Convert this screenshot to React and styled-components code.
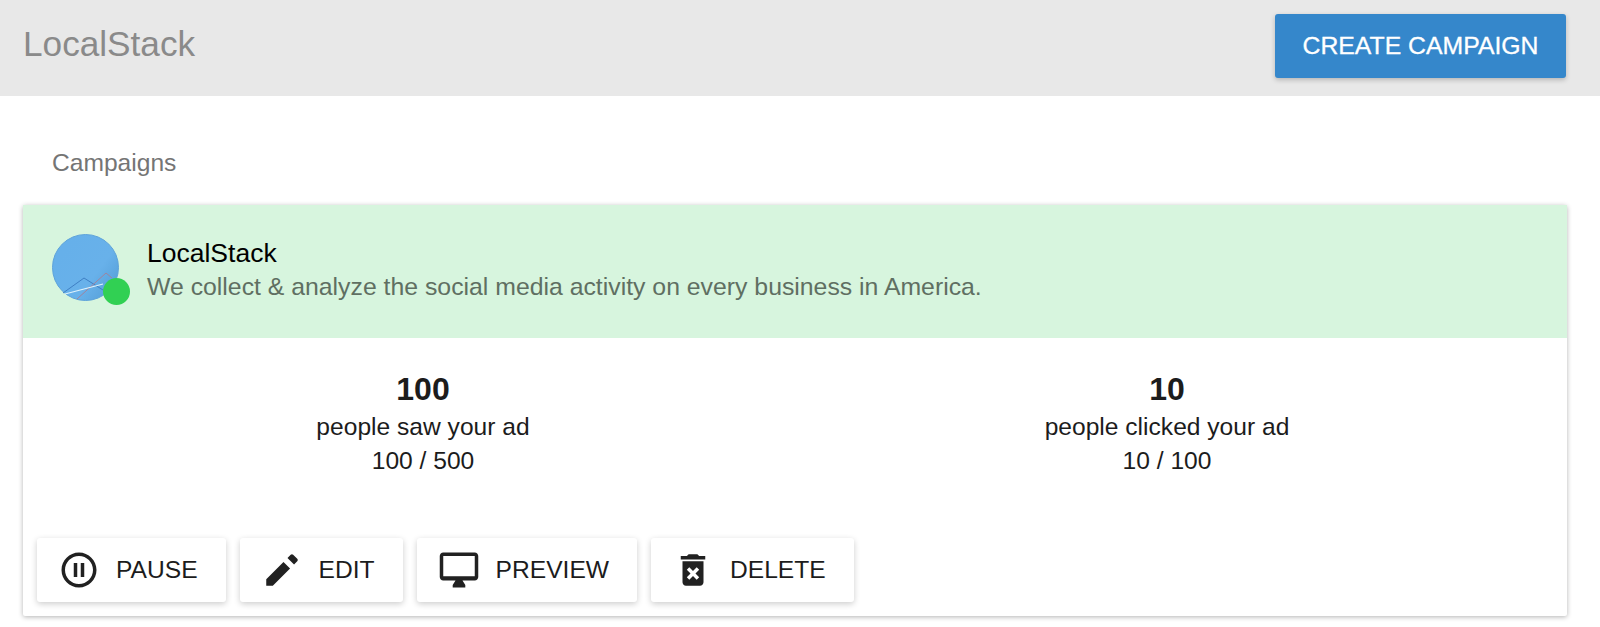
import React from "react";
import styled, { createGlobalStyle } from "styled-components";

const GlobalStyle = createGlobalStyle`
  html, body {
    margin: 0;
    padding: 0;
    background: #fff;
    font-family: "Liberation Sans", Arial, sans-serif;
  }
`;

const actions = [
  {
    label: "PAUSE",
    path: "M9 16h2V8H9v8zm3-14C6.48 2 2 6.48 2 12s4.48 10 10 10 10-4.48 10-10S17.52 2 12 2zm0 18c-4.41 0-8-3.59-8-8s3.59-8 8-8 8 3.59 8 8-3.59 8-8 8zm1-4h2V8h-2v8z",
  },
  {
    label: "EDIT",
    path: "M3 17.25V21h3.75L16.6 11.15l-3.75-3.75L3 17.25zM20.71 7.04c.39-.39.39-1.02 0-1.41l-2.34-2.34c-.39-.39-1.02-.39-1.41 0l-1.83 1.83 3.75 3.75 1.83-1.83z",
  },
  {
    label: "PREVIEW",
    path: "M21 2H3C1.9 2 1 2.9 1 4v12c0 1.1.9 2 2 2h7l-1.6 2.6V22h7.2v-1.4L14 18h7c1.1 0 2-.9 2-2V4c0-1.100-.9-2-2-2zm0 13.600H3V4h18v11.600z",
  },
  {
    label: "DELETE",
    path: "M6 19c0 1.1.9 2 2 2h8c1.1 0 2-.9 2-2V7H6v12zm2.46-7.12l1.41-1.41L12 12.59l2.12-2.12 1.41 1.41L13.41 14l2.12 2.12-1.41 1.41L12 15.41l-2.12 2.12-1.41-1.41L10.59 14l-2.13-2.12zM15.5 4l-1-1h-5l-1 1H5v2h14V4z",
  },
];

const stats = [
  { value: "100", label: "people saw your ad", ratio: "100 / 500" },
  { value: "10", label: "people clicked your ad", ratio: "10 / 100" },
];

export default function App() {
  return (
    <>
      <GlobalStyle />
      <TopBar>
        <Brand>LocalStack</Brand>
        <CreateButton>CREATE CAMPAIGN</CreateButton>
      </TopBar>
      <Content>
        <SectionTitle>Campaigns</SectionTitle>
        <Card>
          <CardHeader>
            <AvatarWrap>
              <svg width="68" height="68" viewBox="0 0 68 68">
                <defs>
                  <linearGradient id="avatarFill" x1="0.2" y1="0.2" x2="1" y2="0.8">
                    <stop offset="0" stopColor="#66b0ea" />
                    <stop offset="0.6" stopColor="#68b1ea" />
                    <stop offset="1" stopColor="#559fd8" />
                  </linearGradient>
                </defs>
                <circle cx="33.5" cy="33.5" r="33" fill="url(#avatarFill)" stroke="#5ea3da" strokeWidth="1" />
                <path d="M11 59 L32 44 L51 56" fill="none" stroke="#3f7fc4" strokeWidth="1" />
                <path d="M25 65 L54 39 L60 44" fill="none" stroke="#a0849e" strokeWidth="1" />
                <path d="M13 60 L51 50" fill="none" stroke="#e0f2fb" strokeWidth="1.2" />
              </svg>
              <StatusDot />
            </AvatarWrap>
            <div>
              <CardName>LocalStack</CardName>
              <CardTagline>We collect &amp; analyze the social media activity on every business in America.</CardTagline>
            </div>
          </CardHeader>
          <StatsRow>
            {stats.map((s) => (
              <Stat key={s.label}>
                <StatValue>{s.value}</StatValue>
                <StatLine>{s.label}</StatLine>
                <StatLine>{s.ratio}</StatLine>
              </Stat>
            ))}
          </StatsRow>
          <Actions>
            {actions.map((a) => (
              <ActionButton key={a.label}>
                <svg width="42" height="42" viewBox="0 0 24 24" fill="#212121">
                  <path d={a.path} />
                </svg>
                {a.label}
              </ActionButton>
            ))}
          </Actions>
        </Card>
      </Content>
    </>
  );
}

const TopBar = styled.header`
  display: flex;
  justify-content: space-between;
  align-items: flex-start;
  height: 96px;
  box-sizing: border-box;
  padding: 14px 34px 0 23px;
  background-color: #e8e8e8;
`;

const Brand = styled.div`
  font-size: 35.2px;
  line-height: 60px;
  color: #8a8a8a;
`;

const CreateButton = styled.button`
  width: 291px;
  height: 64px;
  padding: 0;
  border: none;
  border-radius: 3px;
  background-color: #3587cb;
  color: #fff;
  font-family: inherit;
  font-size: 24.8px;
  -webkit-text-stroke: 0.3px #fff;
  box-shadow: 0 2px 5px rgba(0, 0, 0, 0.22);
`;

const Content = styled.main`
  padding: 0 33px 11px 23px;
`;

const SectionTitle = styled.h2`
  margin: 0;
  padding: 53px 0 0 29px;
  height: 56px;
  font-size: 24.6px;
  font-weight: 400;
  line-height: 28px;
  color: #757575;
`;

const Card = styled.section`
  height: 411px;
  border-radius: 2px;
  background: #fff;
  box-shadow: 0 1px 5px rgba(0, 0, 0, 0.3);
  display: flex;
  flex-direction: column;
`;

const CardHeader = styled.div`
  display: flex;
  align-items: center;
  gap: 27px;
  height: 133px;
  padding: 0 0 4px 29px;
  box-sizing: border-box;
  background-color: #d7f5de;
`;

const AvatarWrap = styled.div`
  position: relative;
  width: 68px;
  height: 68px;
  margin-bottom: 4px;
  svg {
    display: block;
  }
`;

const StatusDot = styled.span`
  position: absolute;
  right: -10px;
  bottom: -3px;
  width: 27px;
  height: 27px;
  border-radius: 50%;
  background-color: #31d053;
`;

const CardName = styled.div`
  font-size: 26.5px;
  line-height: 33px;
  color: #000;
`;

const CardTagline = styled.div`
  font-size: 24.8px;
  line-height: 33px;
  color: #5f6f62;
`;

const StatsRow = styled.div`
  display: grid;
  grid-template-columns: 1fr 1fr;
  padding: 30px 28px 0;
  flex: 1;
`;

const Stat = styled.div`
  text-align: center;
  color: #1c1c1c;
`;

const StatValue = styled.div`
  font-size: 32px;
  font-weight: 700;
  line-height: 42px;
`;

const StatLine = styled.div`
  font-size: 24.6px;
  line-height: 33.5px;
`;

const Actions = styled.div`
  display: flex;
  gap: 14px;
  padding: 0 14px 14px;
`;

const ActionButton = styled.button`
  display: flex;
  align-items: center;
  gap: 16px;
  height: 64px;
  padding: 0 28px 0 21px;
  border: none;
  border-radius: 3px;
  background: #fff;
  color: #1c1c1c;
  font-family: inherit;
  font-size: 24.6px;
  box-shadow: 0 2px 6px rgba(0, 0, 0, 0.2);
`;
